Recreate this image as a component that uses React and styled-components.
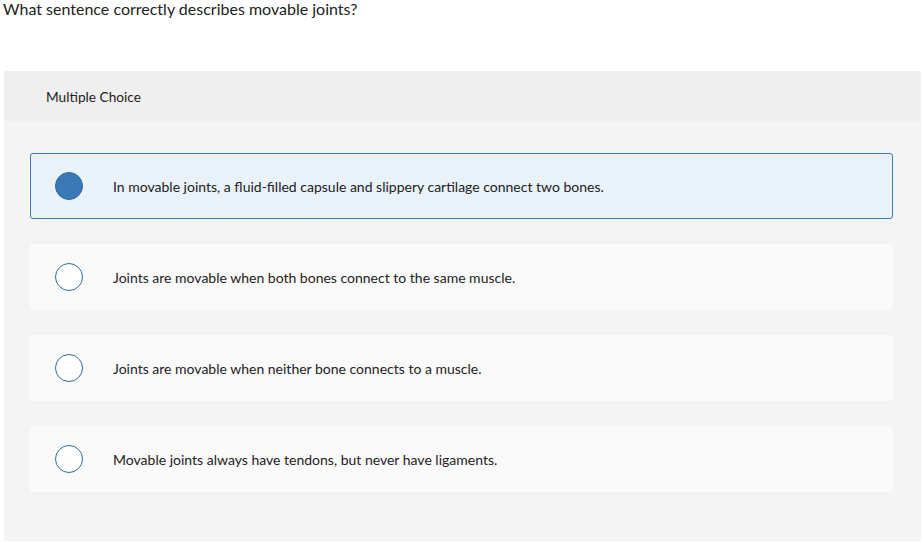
import React from "react";
import styled, { createGlobalStyle } from "styled-components";

const Global = createGlobalStyle`
  html, body { margin: 0; padding: 0; background: #fff; }
  body { font-family: Lato, "Open Sans", "Liberation Sans", sans-serif; color: #222; }
`;

const Page = styled.div`
  width: 922px;
  padding: 0 0 0 4px;
  box-sizing: border-box;
`;

const Question = styled.div`
  font-size: 16px;
  line-height: 18px;
  color: #222;
  margin: 0 0 53px -1px;
`;

const Panel = styled.div`
  background: #f4f4f4;
  width: 917px;
`;

const PanelHeader = styled.div`
  background: #efefef;
  height: 50px;
  display: flex;
  align-items: center;
  padding-left: 42px;
  font-size: 13.7px;
  color: #222;
`;

const Options = styled.div`
  display: flex;
  flex-direction: column;
  gap: 25px;
  padding: 32px 28px 49px 26px;
`;

const Option = styled.label`
  display: flex;
  align-items: center;
  height: 66px;
  box-sizing: border-box;
  border-radius: 3px;
  border: 1px solid ${(p) => (p.$selected ? "#3a7bc0" : "transparent")};
  background: ${(p) => (p.$selected ? "#e9f1f9" : "#fafafa")};
  padding-left: 24px;
  cursor: pointer;
`;

const Radio = styled.span`
  width: 28px;
  height: 28px;
  border-radius: 50%;
  box-sizing: border-box;
  border: 1px solid #2f6a9e;
  background: ${(p) => (p.$selected ? "#3a78b6" : "#fff")};
  flex: none;
`;

const OptionText = styled.span`
  margin-left: 30px;
  font-size: 14px;
  color: #222;
`;

const choices = [
  "In movable joints, a fluid-filled capsule and slippery cartilage connect two bones.",
  "Joints are movable when both bones connect to the same muscle.",
  "Joints are movable when neither bone connects to a muscle.",
  "Movable joints always have tendons, but never have ligaments.",
];

export default function App() {
  return (
    <Page>
      <Global />
      <Question>What sentence correctly describes movable joints?</Question>
      <Panel>
        <PanelHeader>Multiple Choice</PanelHeader>
        <Options>
          {choices.map((c, i) => (
            <Option key={i} $selected={i === 0}>
              <Radio $selected={i === 0} />
              <OptionText>{c}</OptionText>
            </Option>
          ))}
        </Options>
      </Panel>
    </Page>
  );
}
